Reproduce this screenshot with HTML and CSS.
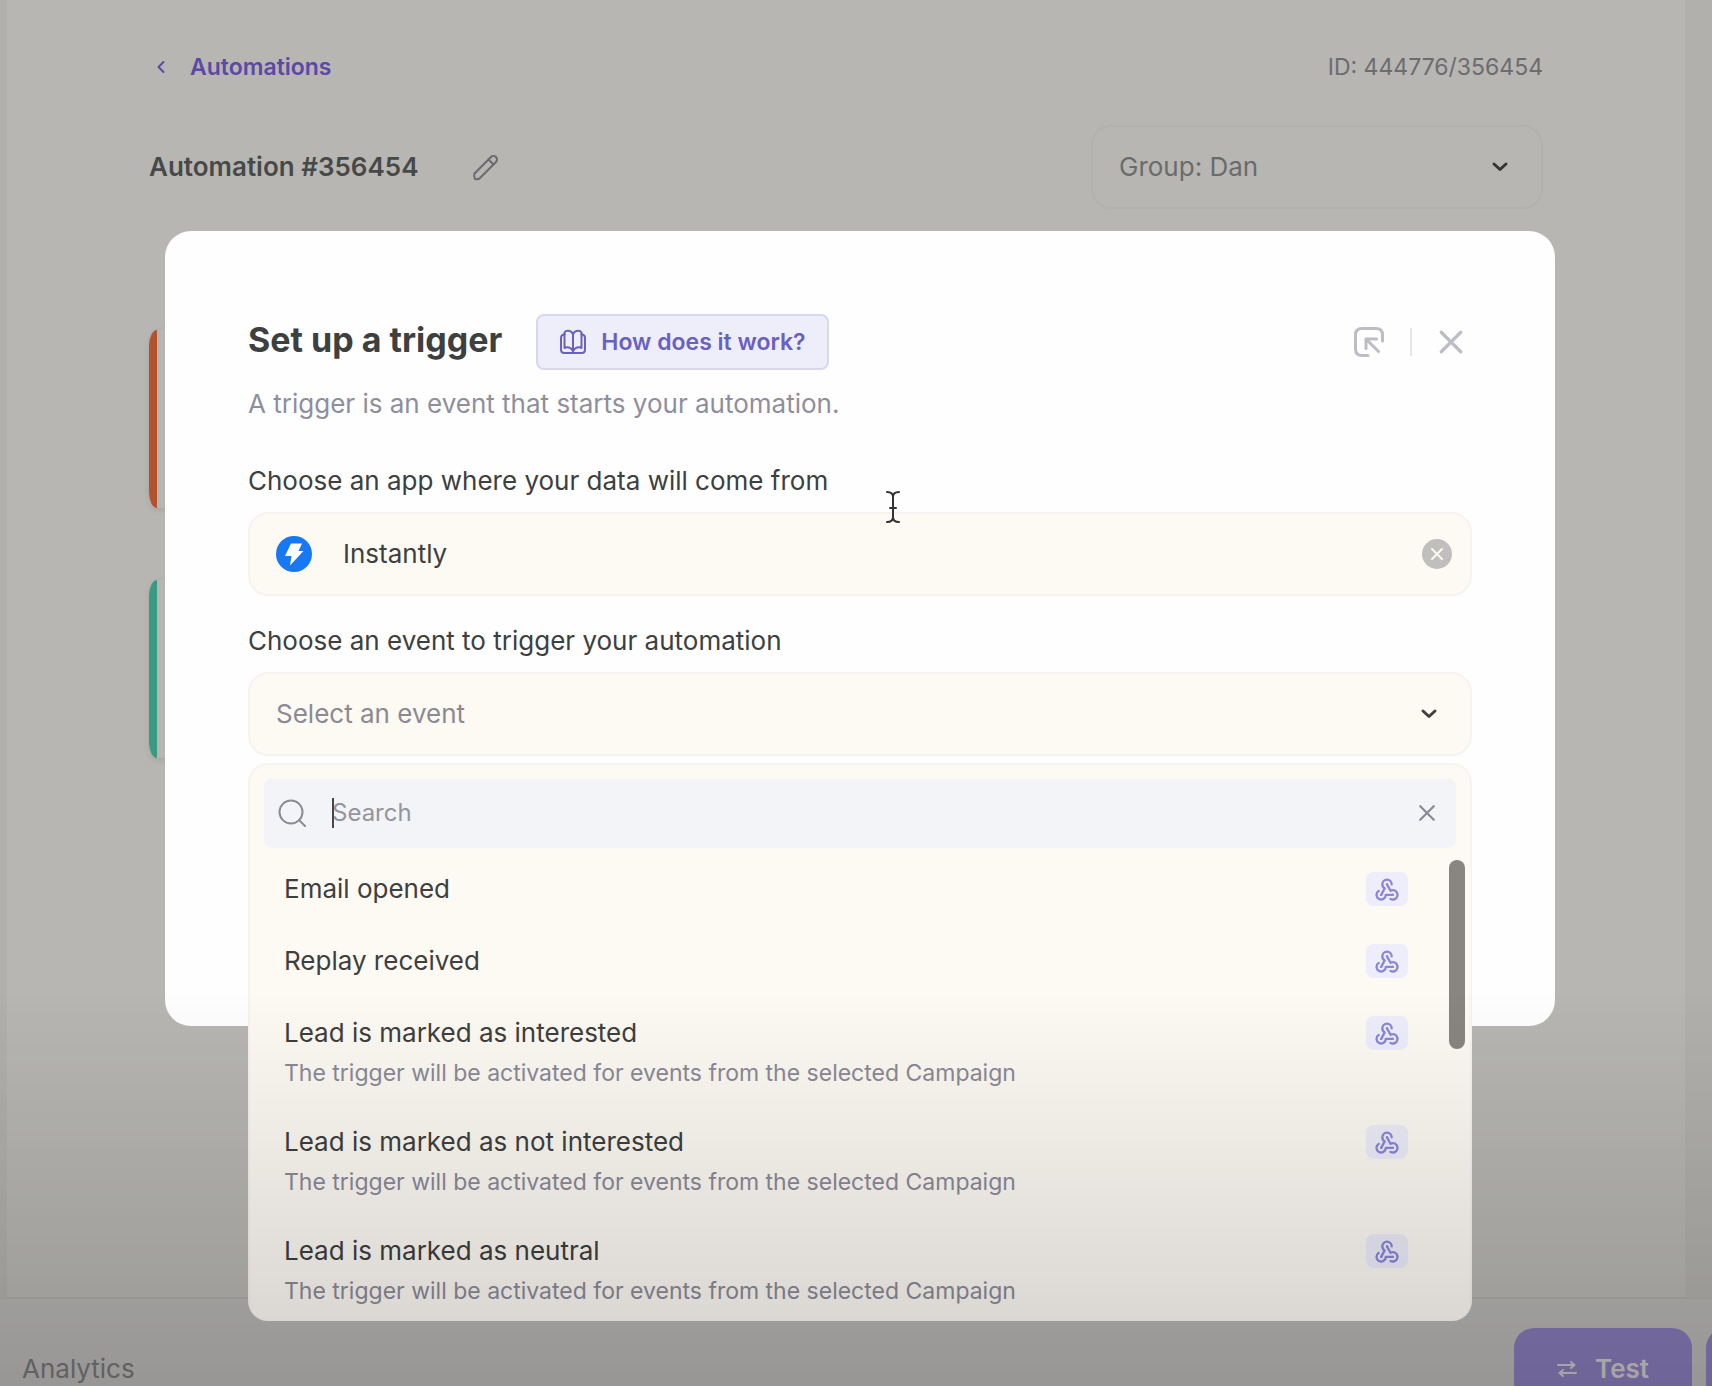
FILE: index.html
```html
<!DOCTYPE html>
<html lang="en">

<head>
    <meta charset="UTF-8">
    <meta name="viewport" content="width=device-width, initial-scale=1.0">
    <title>Automation #356454</title>
    <link rel="stylesheet" href="styles.css">
</head>

<body>
    <!-- Shared icons -->
    <svg class="sprite" aria-hidden="true">
        <symbol id="icon-webhook" viewBox="0 0 24 24">
            <path d="M4.876 13.610a4 4 0 1 0 6.124 3.390h6" />
            <path d="M15.066 20.502a4 4 0 1 0 1.934-7.502c-.706 0-1.424.179-2 .5l-3-5.500" />
            <path d="M16 8a4 4 0 1 0-8 0c0 1.506.77 2.818 2 3.500l-3 5.500" />
            <path d="M12 8h.01M7 17h.01M17 17h.01" />
        </symbol>
        <symbol id="icon-chevron" viewBox="0 0 18 12">
            <path d="M3 3l6 5.500L15 3" />
        </symbol>
        <symbol id="icon-close" viewBox="0 0 24 24">
            <path d="M3 3l18 18M21 3L3 21" />
        </symbol>
    </svg>

    <main class="page">
        <div class="top-row">
            <a class="back-link" href="#">
                <svg class="back-icon" viewBox="0 0 10 14"><path d="M7.500 2L2.500 7l5 5" /></svg>
                Automations
            </a>
            <span class="automation-id">ID: 444776/356454</span>
        </div>
        <div class="title-row">
            <h1>Automation #356454</h1>
            <button class="icon-button" aria-label="Rename">
                <svg class="pencil" viewBox="0 0 28 28">
                    <path d="M2.500 20.500L19 4a3.500 3.500 0 0 1 5 5L7.500 25.500q-2 1-4.500 .5q-1.500-3-.5-5.500z" />
                    <path d="M16.500 6.500l5 5" />
                </svg>
            </button>
            <div class="select-box group-box">
                <select class="field" aria-label="Group">
                    <option>Group: Dan</option>
                </select>
                <svg class="chevron"><use href="#icon-chevron" /></svg>
            </div>
        </div>
        <div class="steps">
            <div class="step step-red"></div>
            <div class="step step-green"></div>
        </div>
    </main>

    <footer class="footer">
        <a class="analytics" href="#">Analytics</a>
        <div class="footer-buttons">
            <button class="footer-button">
                <svg class="swap" viewBox="0 0 20 18">
                    <path d="M1 5h16M14 2l3.500 3-3.500 3M19 13H3M6 10l-3.500 3 3.500 3" />
                </svg>
                Test
            </button>
            <button class="footer-button" aria-label="Save"></button>
        </div>
    </footer>

    <!-- Trigger dialog -->
    <div class="overlay">
        <section class="modal" role="dialog" aria-labelledby="modal-title">
            <div class="modal-header">
                <h2 id="modal-title">Set up a trigger</h2>
                <button class="help-button">
                    <svg class="book" viewBox="0 0 28 26">
                        <path d="M14 5v18M14 5C12 1 7 1 5.500 3.500V19C8 17.500 12 18 14 22c2-4 6-4.500 8.500-3V3.500C21 1 16 1 14 5z" />
                        <path d="M5.500 5.500Q2 5.500 2 9v11.500Q2 24 5.500 24h17q3.500 0 3.500-3.500V9q0-3.500-3.500-3.500" />
                    </svg>
                    How does it work?
                </button>
                <div class="modal-tools">
                    <button class="icon-button" aria-label="Collapse">
                        <svg class="collapse" viewBox="0 0 30 30">
                            <path d="M14 28.500H8Q1.500 28.500 1.500 22V8Q1.500 1.500 8 1.500h14q6.500 0 6.500 6.500v6" />
                            <path d="M24.500 24.500L12 12M12 21.500V12h10.500" />
                        </svg>
                    </button>
                    <span class="divider"></span>
                    <button class="icon-button" aria-label="Close">
                        <svg class="close"><use href="#icon-close" /></svg>
                    </button>
                </div>
            </div>
            <p class="subtitle">A trigger is an event that starts your automation.</p>

            <label class="label" for="app-input">Choose an app where your data will come from</label>
            <div class="app-box">
                <svg class="app-logo" viewBox="0 0 36 36">
                    <circle cx="18" cy="18" r="18" />
                    <path d="M15 7.500h11l-3.500 7.500h5L14 29.500l1.500-9.500H9z" />
                </svg>
                <input id="app-input" type="text" value="Instantly">
                <button class="icon-button" aria-label="Clear app">
                    <svg class="clear" viewBox="0 0 30 30">
                        <circle cx="15" cy="15" r="15" />
                        <path d="M10 10l10 10M20 10L10 20" />
                    </svg>
                </button>
            </div>

            <label class="label" for="event-select">Choose an event to trigger your automation</label>
            <div class="select-box event-box">
                <select class="field" id="event-select">
                    <option>Select an event</option>
                </select>
                <svg class="chevron"><use href="#icon-chevron" /></svg>

                <div class="dropdown">
                    <div class="search">
                        <svg class="search-icon" viewBox="0 0 28 28">
                            <circle cx="13" cy="13" r="11.500" />
                            <path d="M21 21l6 6" />
                        </svg>
                        <div class="search-text">
                            <input type="text" placeholder="Search" aria-label="Search events">
                            <span class="caret"></span>
                        </div>
                        <button class="icon-button" aria-label="Clear search">
                            <svg class="search-clear"><use href="#icon-close" /></svg>
                        </button>
                    </div>
                    <ul class="events">
                        <li>
                            <button class="event">
                                <span class="event-name">Email opened</span>
                                <span class="badge"><svg><use href="#icon-webhook" /></svg></span>
                            </button>
                        </li>
                        <li>
                            <button class="event">
                                <span class="event-name">Replay received</span>
                                <span class="badge"><svg><use href="#icon-webhook" /></svg></span>
                            </button>
                        </li>
                        <li>
                            <button class="event">
                                <span class="event-name">Lead is marked as interested
                                    <small>The trigger will be activated for events from the selected Campaign</small>
                                </span>
                                <span class="badge"><svg><use href="#icon-webhook" /></svg></span>
                            </button>
                        </li>
                        <li>
                            <button class="event">
                                <span class="event-name">Lead is marked as not interested
                                    <small>The trigger will be activated for events from the selected Campaign</small>
                                </span>
                                <span class="badge"><svg><use href="#icon-webhook" /></svg></span>
                            </button>
                        </li>
                        <li>
                            <button class="event">
                                <span class="event-name">Lead is marked as neutral
                                    <small>The trigger will be activated for events from the selected Campaign</small>
                                </span>
                                <span class="badge"><svg><use href="#icon-webhook" /></svg></span>
                            </button>
                        </li>
                    </ul>
                    <span class="scroll-thumb"></span>
                </div>
            </div>
        </section>
    </div>

    <svg class="pointer" viewBox="0 0 16 34" aria-hidden="true">
        <path d="M2 2q6 0 6 5q0-5 6-5M8 7v20M2 32q6 0 6-5q0 5 6 5M5 18h6" />
    </svg>
    <div class="shade"></div>
</body>

</html>
```

FILE: styles.css
```css
* {
    margin: 0;
    padding: 0;
    box-sizing: border-box;
}

body {
    font-family: Inter, "Liberation Sans", sans-serif;
    font-size: 26px;
    line-height: 32px;
    color: #3d403e;
    background: #b1b0ac;
    height: 100vh;
    display: flex;
    flex-direction: column;
    overflow: hidden;
}

button,
input,
select {
    font: inherit;
    color: inherit;
    background: none;
    border: none;
    outline: none;
}

a {
    text-decoration: none;
}

svg {
    display: block;
    flex: none;
    fill: none;
    stroke: currentColor;
    stroke-width: 2;
    stroke-linecap: round;
    stroke-linejoin: round;
}

.sprite {
    position: absolute;
    width: 0;
    height: 0;
}

.icon-button {
    flex: none;
    cursor: pointer;
}

/* Page behind the dialog */
.page {
    flex: 1;
    min-height: 0;
    margin: 0 27px 0 7px;
    padding: 51px 142px 0;
    background: #b7b6b2;
}

.top-row,
.title-row {
    display: flex;
    align-items: center;
}

.top-row {
    justify-content: space-between;
    font-size: 23px;
    margin-bottom: 42px;
}

.back-link {
    display: flex;
    align-items: center;
    gap: 24px;
    padding-left: 7px;
    font-weight: 600;
    color: #5a4aa6;
}

.back-icon {
    width: 10px;
    height: 14px;
}

.automation-id {
    color: #6c6c6f;
}

h1 {
    font-size: 26px;
    font-weight: 600;
    color: #464947;
    margin-right: 54px;
}

.pencil {
    width: 28px;
    height: 28px;
    color: #6a6a70;
}

.select-box {
    position: relative;
}

.field {
    display: block;
    width: 100%;
    height: 84px;
    padding: 0 26px;
    border: 2px solid #f6f3f1;
    border-radius: 20px;
    appearance: none;
}

.chevron {
    position: absolute;
    top: 36px;
    right: 34px;
    width: 18px;
    height: 12px;
    stroke-width: 3;
}

.group-box {
    width: 452px;
    margin-left: auto;
    color: #6a6b6d;
}

.group-box .field {
    border-color: #b2b1ad;
}

.group-box .chevron {
    color: #353535;
}

.steps {
    display: flex;
    flex-direction: column;
    gap: 72px;
    padding-top: 121px;
}

.step {
    height: 178px;
    border-left: 8px solid;
    border-radius: 8px / 16px;
    box-shadow: 0 2px 6px rgba(0, 0, 0, 0.1);
}

.step-red {
    border-color: #b4512f;
}

.step-green {
    border-color: #379a83;
}

/* Bottom bar */
.footer {
    flex: none;
    display: flex;
    align-items: flex-start;
    justify-content: space-between;
    height: 89px;
    padding: 29px 0 0 22px;
    border-top: 2px solid #aeadaa;
    background: #b5b4b2;
}

.analytics,
.footer-button {
    height: 82px;
    line-height: 82px;
}

.analytics {
    color: #737373;
}

.footer-buttons {
    display: flex;
    gap: 14px;
    width: 198px;
}

.footer-button {
    flex: none;
    display: flex;
    align-items: center;
    justify-content: center;
    gap: 18px;
    width: 178px;
    border-radius: 20px;
    font-weight: 600;
    color: #c6c3c8;
    background: #8478b5;
}

.swap {
    width: 20px;
    height: 18px;
}

/* Dialog */
.overlay {
    position: fixed;
    inset: 0;
    padding: 231px 157px 0 165px;
}

.modal {
    min-height: 795px;
    padding: 83px 83px 0;
    border-radius: 26px;
    background: #fefefe;
}

.modal-header {
    display: flex;
    align-items: center;
    margin-bottom: 18px;
}

h2 {
    font-size: 34px;
    font-weight: 700;
    margin-right: 34px;
    padding-bottom: 4px;
}

.help-button {
    display: flex;
    align-items: center;
    gap: 14px;
    height: 56px;
    padding: 0 21px;
    border: 2px solid #d9d7f0;
    border-radius: 8px;
    font-size: 23px;
    font-weight: 600;
    color: #6a60c0;
    background: #eeeefb;
}

.book {
    width: 28px;
    height: 26px;
}

.modal-tools {
    display: flex;
    align-items: center;
    gap: 26px;
    margin-left: auto;
    padding-right: 8px;
    color: #bdbdc6;
}

.collapse {
    width: 30px;
    height: 30px;
    stroke-width: 3;
}

.divider {
    width: 2px;
    height: 28px;
    background: #e6e6ea;
}

.close {
    width: 26px;
    height: 26px;
    stroke-width: 3;
}

.subtitle {
    color: #8f8e9c;
    margin-bottom: 45px;
}

.label {
    display: block;
    margin-bottom: 15px;
}

.app-box {
    display: flex;
    align-items: center;
    height: 84px;
    padding: 0 18px 0 26px;
    margin-bottom: 29px;
    border: 2px solid #f6f3f1;
    border-radius: 20px;
    background: #fdf9f3;
}

.app-box input {
    flex: 1;
    min-width: 0;
    margin-left: 31px;
}

.app-logo {
    width: 36px;
    height: 36px;
    fill: #fff;
    stroke: none;
}

.app-logo circle {
    fill: #1877f2;
}

.clear {
    width: 30px;
    height: 30px;
    color: #fdf9f3;
}

.clear circle {
    fill: #c0bfbd;
    stroke: none;
}

.event-box .field {
    color: #8b8a93;
    background: #fdf9f3;
}

/* Event list */
.dropdown {
    position: absolute;
    top: 91px;
    left: 0;
    right: 0;
    padding: 14px 14px 0;
    border: 2px solid #f6f3f1;
    border-bottom: none;
    border-radius: 20px;
    background: #fdf9f3;
    overflow: hidden;
}

.search {
    display: flex;
    align-items: center;
    height: 69px;
    padding: 0 20px 2px 14px;
    border-radius: 8px;
    font-size: 24px;
    color: #8b8a93;
    background: #f3f4f7;
}

.search-icon {
    width: 28px;
    height: 28px;
}

.search-text {
    position: relative;
    flex: 1;
    margin-left: 26px;
}

.search-text input {
    display: block;
    width: 100%;
}

.search-text input::placeholder {
    color: #96959d;
}

.caret {
    position: absolute;
    top: 1px;
    left: 0;
    width: 2px;
    height: 30px;
    background: #45474a;
}

.search-clear {
    width: 18px;
    height: 18px;
    stroke-width: 3;
}

.events {
    height: 473px;
    padding: 5px 48px 0 20px;
    list-style: none;
    overflow: hidden;
}

.event {
    display: flex;
    justify-content: space-between;
    align-items: flex-start;
    width: 100%;
    padding: 20px 0;
    text-align: left;
}

.event small {
    display: block;
    margin-top: 11px;
    font-size: 23px;
    line-height: 26px;
    color: #8b8a98;
}

.badge {
    display: flex;
    align-items: center;
    justify-content: center;
    width: 42px;
    height: 34px;
    margin-top: -1px;
    margin-bottom: -1px;
    border-radius: 8px;
    color: #8d86d8;
    background: #ededfb;
}

.badge svg {
    width: 28px;
    height: 28px;
}

.scroll-thumb {
    position: absolute;
    top: 95px;
    right: 5px;
    width: 16px;
    height: 189px;
    border-radius: 8px;
    background: #878681;
}

/* Mouse pointer and bottom fade over everything */
.pointer {
    position: absolute;
    top: 490px;
    left: 885px;
    width: 16px;
    height: 34px;
    color: #333;
}

.shade {
    position: fixed;
    left: 0;
    right: 0;
    bottom: 0;
    height: 396px;
    background: linear-gradient(rgba(0, 0, 0, 0), rgba(0, 0, 0, 0.16));
    pointer-events: none;
}
```
